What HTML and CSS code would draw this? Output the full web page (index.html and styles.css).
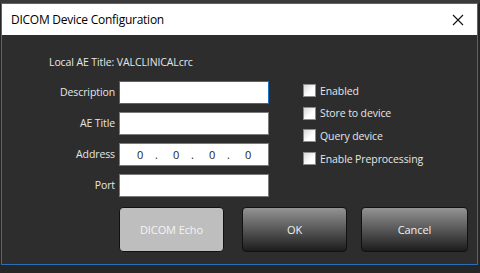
FILE: index.html
```html
<!DOCTYPE html>
<html>
<head>
<meta charset="utf-8">
<link rel="stylesheet" href="styles.css">
</head>
<body>
<div class="topstrip"></div>
<div class="window">
  <div class="titlebar">
    <span class="title">DICOM Device Configuration</span>
    <svg class="close" width="12" height="12" viewBox="0 0 12 12"><path d="M1 1 L11 11 M11 1 L1 11" stroke="#111" stroke-width="1.1" fill="none"/></svg>
  </div>
  <div class="content">
    <div class="local">Local AE Title: VALCLINICALcrc</div>
    <div class="form">
      <div class="fields">
        <label class="lbl">Description</label><div class="input focus"></div>
        <label class="lbl">AE Title</label><div class="input"></div>
        <label class="lbl">Address</label>
        <div class="input ip"><span>0</span><span class="dot">.</span><span>0</span><span class="dot">.</span><span>0</span><span class="dot">.</span><span>0</span></div>
        <label class="lbl">Port</label><div class="input"></div>
      </div>
      <div class="checks">
        <div class="check"><span class="box"></span><span>Enabled</span></div>
        <div class="check"><span class="box"></span><span>Store to device</span></div>
        <div class="check"><span class="box"></span><span>Query device</span></div>
        <div class="check"><span class="box"></span><span>Enable Preprocessing</span></div>
      </div>
    </div>
    <div class="buttons">
      <div class="btn disabled">DICOM Echo</div>
      <div class="btn ok">OK</div>
      <div class="btn cancel">Cancel</div>
    </div>
  </div>
</div>
</body>
</html>
```
FILE: styles.css
```css
html, body {
  margin: 0;
  padding: 0;
}
body {
  width: 480px;
  height: 273px;
  overflow: hidden;
  background: #262626;
  font-family: "Open Sans", "Noto Sans", sans-serif;
  color: #e6e6e6;
}
.topstrip {
  height: 3px;
  background: #3a3a3a;
}
.window {
  margin-left: 1px;
  width: 477px;
  height: 262px;
  box-sizing: border-box;
  border: 1px solid #2a6fb5;
  background: #2d2d2d;
  display: flex;
  flex-direction: column;
}
.titlebar {
  height: 31px;
  background: #ffffff;
  display: flex;
  align-items: center;
  justify-content: space-between;
  padding: 0 9px 0 9px;
  flex-shrink: 0;
}
.title {
  font-size: 12px;
  color: #000;
  letter-spacing: -0.25px;
}
.close {
  margin-right: 4px;
}
.content {
  padding: 20px 0 0 0;
  font-size: 10.5px;
  letter-spacing: -0.1px;
}
.local {
  margin-left: 47px;
  line-height: 14px;
  height: 14px;
}
.form {
  display: flex;
  margin-top: 12px;
}
.fields {
  margin-left: 38px;
  display: grid;
  grid-template-columns: 75px 150px;
  grid-auto-rows: 23px;
  column-gap: 4px;
  row-gap: 8px;
}
.lbl {
  text-align: right;
  align-self: center;
  margin-top: -2px;
}
.input {
  background: #ffffff;
  border: 1px solid #7a7a7a;
  box-sizing: border-box;
}
.input.focus {
  border-color: #1673c8;
}
.ip {
  display: flex;
  align-items: center;
  color: #222;
  padding-left: 17px;
  font-size: 11px;
}
.ip span {
  width: 18px;
}
.checks {
  margin-left: 34px;
  margin-top: 3px;
  display: flex;
  flex-direction: column;
  gap: 9.7px;
}
.check {
  display: flex;
  align-items: center;
  height: 13px;
  gap: 4px;
}
.box {
  width: 13px;
  height: 13px;
  box-sizing: border-box;
  border: 1px solid #8c8c8c;
  background: linear-gradient(135deg, #d8d8d8 0%, #ffffff 60%);
}
.buttons {
  display: flex;
  margin: 10px 0 0 117px;
}
.btn {
  height: 45px;
  box-sizing: border-box;
  border: 1px solid #111;
  border-radius: 4px;
  display: flex;
  align-items: center;
  justify-content: center;
  font-size: 11px;
}
.disabled {
  width: 105px;
  background: #bebebe;
  color: #f4f4f4;
}
.ok {
  width: 105px;
  margin-left: 18px;
  background: linear-gradient(#939393, #1c1c1c);
  color: #f0f0f0;
}
.cancel {
  width: 107px;
  margin-left: 14px;
  background: linear-gradient(#939393, #1c1c1c);
  color: #f0f0f0;
}
```
